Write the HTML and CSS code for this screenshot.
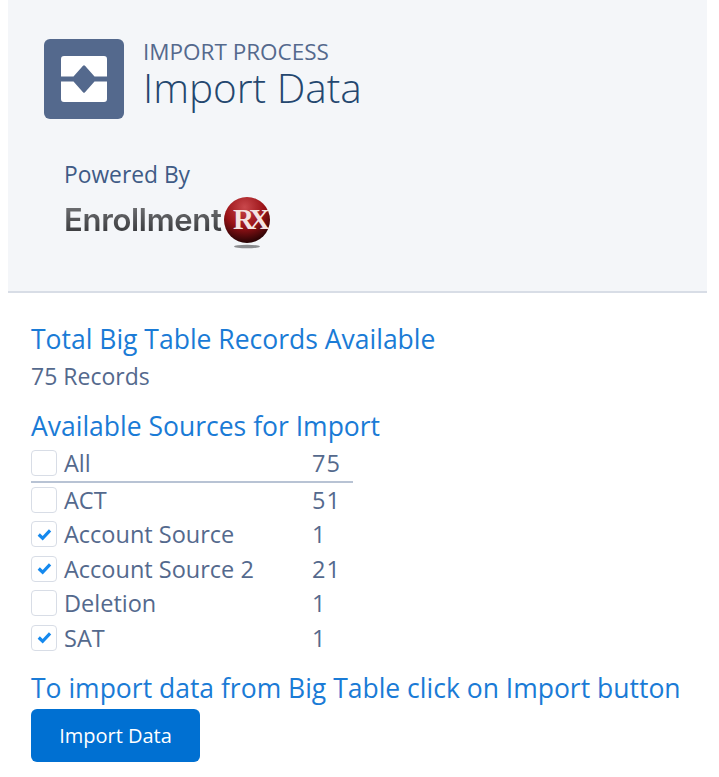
FILE: index.html
```html
<!DOCTYPE html>
<html lang="en">
<head>
<meta charset="utf-8">
<title>Import Data</title>
<link rel="stylesheet" href="styles.css">
</head>
<body>
<header class="header">
  <div class="title-row">
    <div class="app-icon">
      <svg viewBox="0 0 46 46" width="46" height="46" aria-hidden="true">
        <path fill="#fff" d="M3 0H43A3 3 0 0 1 46 3V20.500H33.500L24 9.800Q23 8.800 22 9.800L12.500 20.500H0V3A3 3 0 0 1 3 0Z"/>
        <path fill="#fff" d="M0 25.500H12.500L22 36.200Q23 37.200 24 36.200L33.500 25.500H46V43A3 3 0 0 1 43 46H3A3 3 0 0 1 0 43Z"/>
      </svg>
    </div>
    <div class="titles">
      <div class="eyebrow">IMPORT PROCESS</div>
      <h1 class="page-title">Import Data</h1>
    </div>
  </div>
  <div class="powered">
    <div class="powered-label">Powered By</div>
    <div class="logo">
      <span class="logo-word">Enrollment</span>
      <svg class="logo-mark" viewBox="0 0 50 56" width="50" height="56" aria-hidden="true">
        <defs>
          <radialGradient id="ball" cx="45%" cy="22%" r="78%">
            <stop offset="0" stop-color="#c9484c"/>
            <stop offset="0.55" stop-color="#9a1217"/>
            <stop offset="1" stop-color="#240304"/>
          </radialGradient>
        </defs>
        <ellipse cx="25" cy="50.500" rx="13" ry="1.800" fill="#8b8d90"/>
        <circle cx="25" cy="24" r="23" fill="url(#ball)"/>
        <text x="27" y="33" text-anchor="middle" class="logo-rx">RX</text>
      </svg>
    </div>
  </div>
</header>
<main class="content">
  <h2 class="heading">Total Big Table Records Available</h2>
  <p class="records">75 Records</p>
  <h2 class="heading sources">Available Sources for Import</h2>
  <ul class="list">
    <li class="row row-all"><span class="box"></span><span class="name">All</span><span class="num">75</span></li>
    <li class="row row-act"><span class="box"></span><span class="name">ACT</span><span class="num">51</span></li>
    <li class="row"><span class="box"><svg viewBox="0 0 16 14" width="15" height="13"><path d="M1.800 7 6 11 14 2.500" fill="none" stroke="#1589ee" stroke-width="3.400"/></svg></span><span class="name">Account Source</span><span class="num">1</span></li>
    <li class="row"><span class="box"><svg viewBox="0 0 16 14" width="15" height="13"><path d="M1.800 7 6 11 14 2.500" fill="none" stroke="#1589ee" stroke-width="3.400"/></svg></span><span class="name">Account Source 2</span><span class="num">21</span></li>
    <li class="row"><span class="box"></span><span class="name">Deletion</span><span class="num">1</span></li>
    <li class="row"><span class="box"><svg viewBox="0 0 16 14" width="15" height="13"><path d="M1.800 7 6 11 14 2.500" fill="none" stroke="#1589ee" stroke-width="3.400"/></svg></span><span class="name">SAT</span><span class="num">1</span></li>
  </ul>
  <h2 class="heading cta">To import data from Big Table click on Import button</h2>
  <button class="button" type="button">Import Data</button>
</main>
</body>
</html>
```
FILE: styles.css
```css
* { box-sizing: border-box; }
html, body { margin: 0; padding: 0; background: #fff; }
body {
  font-family: "Open Sans", "Noto Sans", sans-serif;
  color: #54698d;
  width: 719px;
  height: 777px;
  overflow: hidden;
}
.header {
  margin: 0 12px 0 8px;
  height: 293px;
  background: #f4f6f9;
  border-bottom: 2px solid #d8dde6;
  padding: 39px 0 0 36px;
}
.title-row { display: flex; align-items: flex-start; }
.app-icon {
  width: 80px;
  height: 80px;
  background: #54698d;
  border-radius: 6px;
  display: flex;
  align-items: center;
  justify-content: center;
}
.titles { margin-left: 19px; }
.eyebrow { font-size: 22.500px; line-height: 26px; color: #54698d; }
.page-title {
  margin: 0;
  font-size: 40.500px;
  line-height: 46px;
  font-weight: 300;
  color: #24476f;
}
.powered { margin: 42px 0 0 20px; }
.powered-label { font-size: 22.800px; line-height: 28px; color: #3f5b86; }
.logo { display: flex; align-items: flex-start; height: 56px; }
.logo-word {
  font-family: "Inter", sans-serif;
  font-size: 31px;
  font-weight: 600;
  letter-spacing: -0.300px;
  line-height: 36px;
  margin-top: 13px;
  width: 160px;
  flex: none;
  background: linear-gradient(#77787b, #2f3033);
  -webkit-background-clip: text;
  background-clip: text;
  color: transparent;
}
.logo-mark { margin-left: -2px; margin-top: 7px; }
.logo-rx {
  font-family: "Liberation Serif", serif;
  font-size: 29px;
  font-weight: 700;
  letter-spacing: -5px;
  fill: #f4e4e2;
}
.content { padding: 29px 0 0 31px; }
.heading {
  margin: 0;
  font-size: 26.500px;
  line-height: 34px;
  font-weight: 400;
  color: #1a7bd6;
}
.records { margin: 6px 0 0; font-size: 23px; line-height: 28px; color: #54698d; }
.sources { margin-top: 19px; }
.list { list-style: none; margin: 4px 0 0; padding: 0; width: 322px; }
.row { display: flex; align-items: center; height: 34.500px; font-size: 23.500px; }
.row-all { height: 36px; border-bottom: 2px solid #b8c3d4; padding-bottom: 2px; }
.row-act { height: 34px; }
.box {
  width: 26px;
  height: 26px;
  background: #fff;
  border: 1px solid #d8dde6;
  border-radius: 4px;
  display: flex;
  align-items: center;
  justify-content: center;
  flex: none;
}
.name { margin-left: 7px; width: 248px; flex: none; }
.num { flex: none; letter-spacing: 1px; }
.cta { margin-top: 16px; }
.button {
  display: block;
  margin-top: 4px;
  width: 169px;
  height: 53px;
  background: #0070d2;
  color: #fff;
  border: 0;
  border-radius: 6px;
  font-family: inherit;
  font-size: 20px;
}
```
